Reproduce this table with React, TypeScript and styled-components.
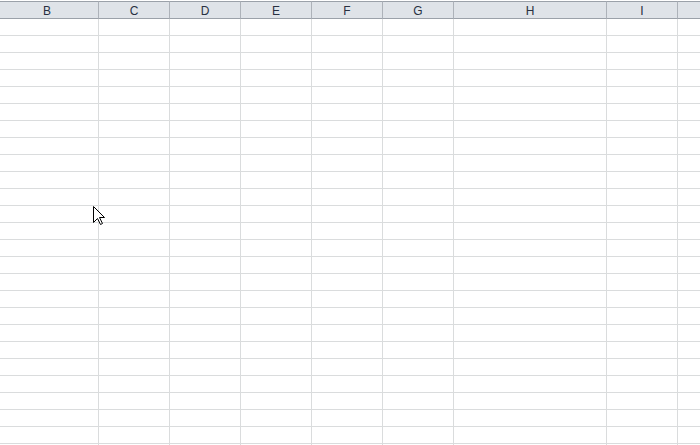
import styled, { createGlobalStyle } from "styled-components";

const columns = [
  { label: "B", width: 99 },
  { label: "C", width: 71 },
  { label: "D", width: 71 },
  { label: "E", width: 71 },
  { label: "F", width: 71 },
  { label: "G", width: 71 },
  { label: "H", width: 153 },
  { label: "I", width: 71 },
  { label: "", width: 71 },
];

const ROWS = 26;

const GlobalStyle = createGlobalStyle`
  html, body {
    margin: 0;
    padding: 0;
    background: #ffffff;
    overflow: hidden;
  }
`;

const Sheet = styled.div`
  position: relative;
  width: 700px;
  height: 445px;
  padding-top: 1px;
  box-sizing: border-box;
  overflow: hidden;
  background: #ffffff;
  font-family: "Liberation Sans", Arial, sans-serif;
`;

const Grid = styled.div`
  display: grid;
  grid-template-columns: ${columns.map((c) => `${c.width}px`).join(" ")};
  grid-template-rows: 18px;
  grid-auto-rows: 17px;
`;

const HeaderCell = styled.div<{ $shift?: number }>`
  box-sizing: border-box;
  background: #dfe3e8;
  border-top: 1px solid #9ba1a9;
  border-bottom: 1px solid #9ba1a9;
  border-right: 1px solid #adb2b9;
  display: flex;
  align-items: center;
  justify-content: center;
  font-size: 12px;
  color: #283041;
  padding-top: 1px;
  padding-right: ${(p) => p.$shift ?? 0}px;
`;

const Cell = styled.div`
  box-sizing: border-box;
  border-right: 1px solid #dadcdd;
  border-bottom: 1px solid #dadcdd;
`;

const Pointer = styled.svg`
  position: absolute;
  left: 93px;
  top: 206px;
  width: 13px;
  height: 20px;
`;

export default function App() {
  return (
    <>
      <GlobalStyle />
      <Sheet>
        <Grid>
          {columns.map((c, i) => (
            <HeaderCell key={`h${i}`} $shift={i === 0 ? 4 : 0}>
              {c.label}
            </HeaderCell>
          ))}
          {Array.from({ length: ROWS }).map((_, r) =>
            columns.map((_, i) => <Cell key={`${r}-${i}`} />)
          )}
        </Grid>
        <Pointer viewBox="0 0 13 20">
          <path
            d="M0.5 0.5 L0.5 16.5 L4.5 12.5 L7.5 18.5 L9.5 17.5 L6.5 11.5 L11.5 11.5 Z"
            fill="#ffffff"
            stroke="#000000"
            strokeWidth="1"
            strokeLinejoin="miter"
          />
        </Pointer>
      </Sheet>
    </>
  );
}
